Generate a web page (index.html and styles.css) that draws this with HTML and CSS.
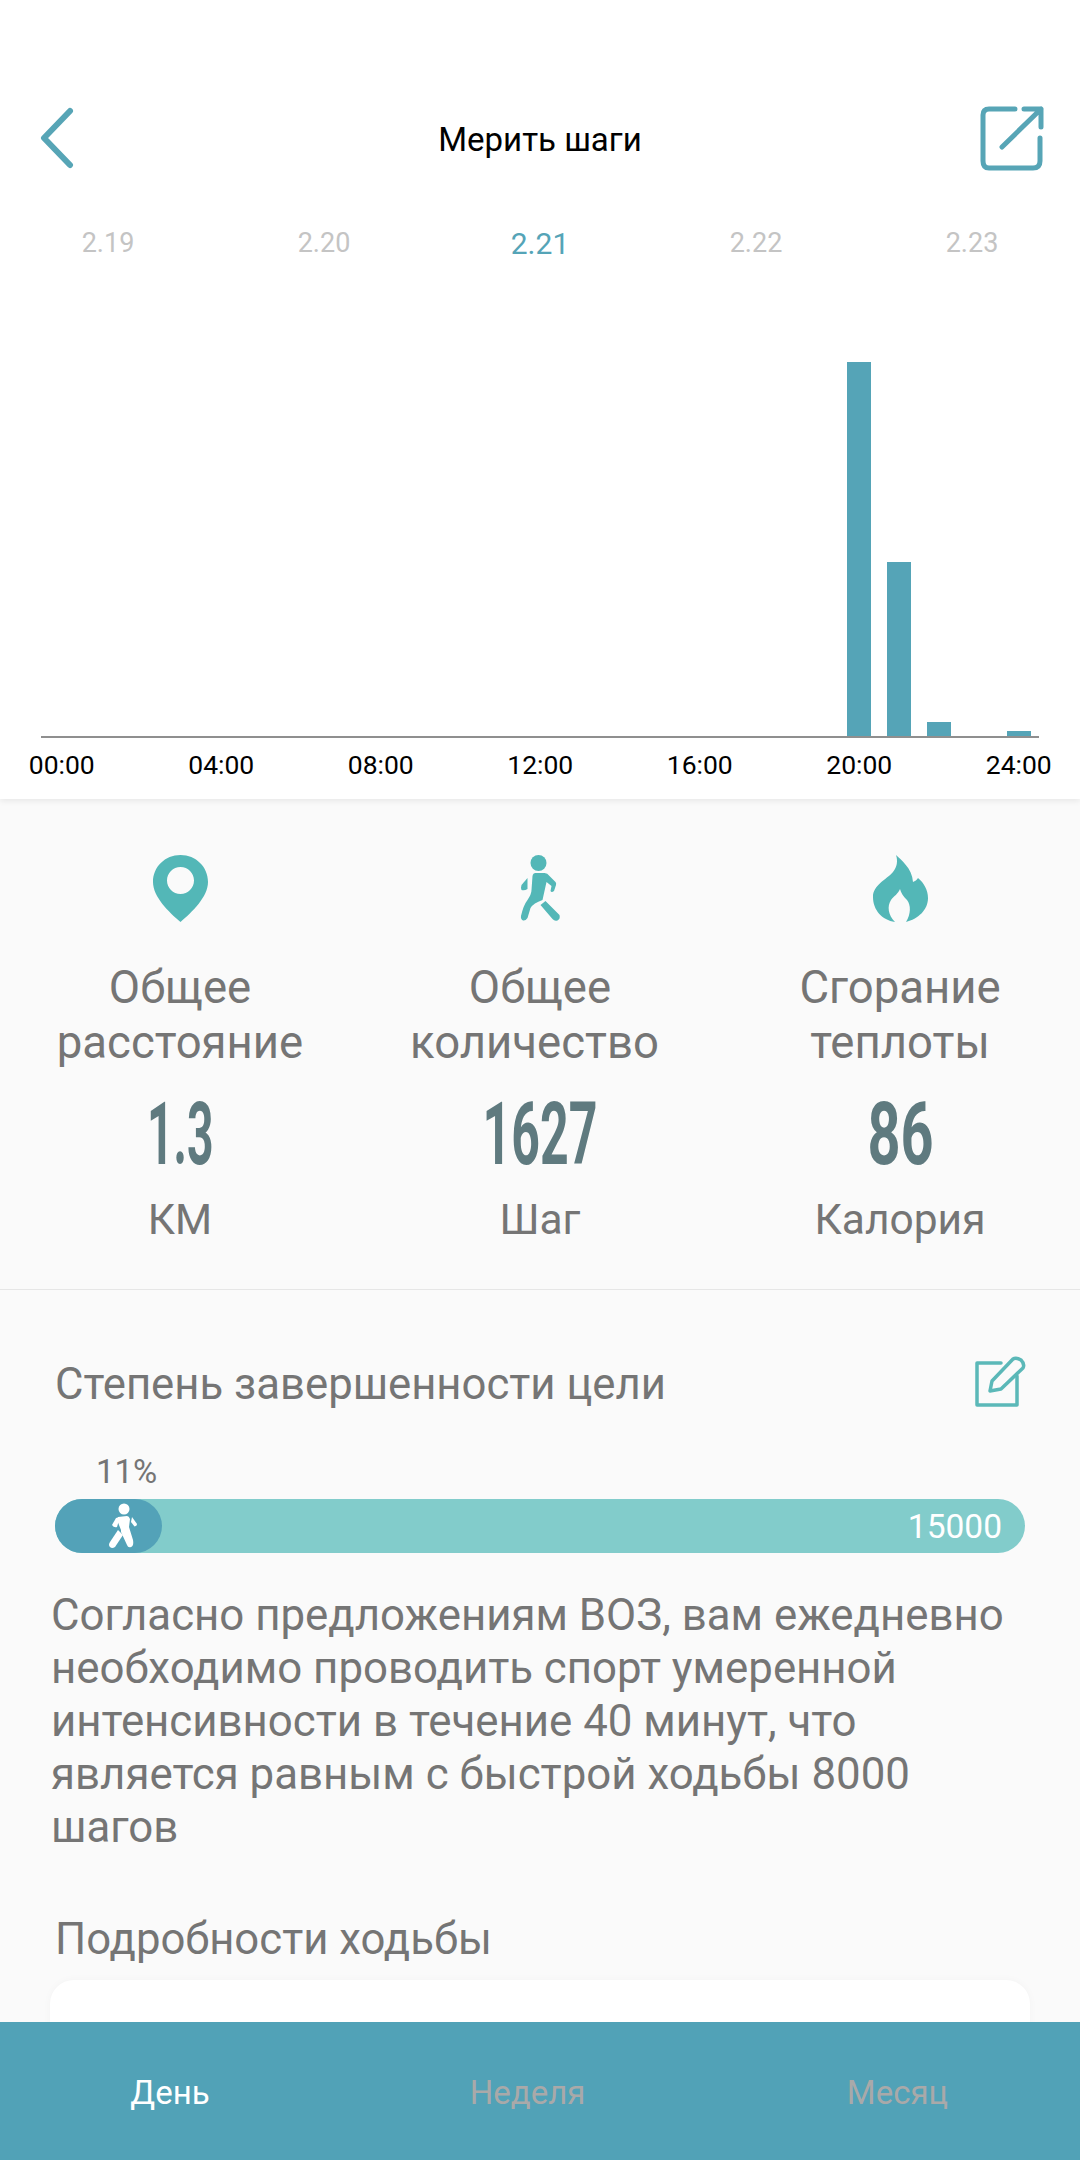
FILE: index.html
```html
<!DOCTYPE html>
<html lang="ru">
<head>
<meta charset="utf-8">
<title>Мерить шаги</title>
<link rel="stylesheet" href="styles.css">
</head>
<body>
<div class="screen">
  <main class="scroll">
    <section class="top">
      <header class="header">
        <svg class="back" viewBox="0 0 36 62" aria-hidden="true"><path d="M31 4 L5 31 L31 58" fill="none" stroke="#57a5b6" stroke-width="6" stroke-linecap="round" stroke-linejoin="round"/></svg>
        <h1 class="title">Мерить шаги</h1>
        <svg class="share" viewBox="0 0 66 68" aria-hidden="true"><path d="M36 3 H10 Q4 3 4 9 V55 Q4 62 10 62 H54 Q61 62 61 55 V32 M45 3 H62 V21 M62 3 L23 41" fill="none" stroke="#57a5b6" stroke-width="5" stroke-linecap="round" stroke-linejoin="round"/></svg>
      </header>
      <div class="dates">
        <span class="date">2.19</span>
        <span class="date">2.20</span>
        <span class="date date-on">2.21</span>
        <span class="date">2.22</span>
        <span class="date">2.23</span>
      </div>
      <div class="chart">
        <div class="slot"></div><div class="slot"></div><div class="slot"></div><div class="slot"></div><div class="slot"></div>
        <div class="slot"></div><div class="slot"></div><div class="slot"></div><div class="slot"></div><div class="slot"></div>
        <div class="slot"></div><div class="slot"></div><div class="slot"></div><div class="slot"></div><div class="slot"></div>
        <div class="slot"></div><div class="slot"></div><div class="slot"></div><div class="slot"></div><div class="slot"></div>
        <div class="slot"><div class="bar" style="height:374px"></div></div>
        <div class="slot"><div class="bar" style="height:174px"></div></div>
        <div class="slot"><div class="bar" style="height:14px"></div></div>
        <div class="slot"></div>
        <div class="slot"><div class="bar" style="height:5px"></div></div>
      </div>
      <div class="times">
        <span>00:00</span><span>04:00</span><span>08:00</span><span>12:00</span><span>16:00</span><span>20:00</span><span>24:00</span>
      </div>
    </section>

    <section class="stats">
      <div class="stat">
        <svg class="stat-icon" viewBox="0 0 55 67" aria-hidden="true"><path fill="#53b7b7" fill-rule="evenodd" d="M27.5 0 C43 0 55 12 55 27 C55 42 39 57 27.500 67 C16 57 0 42 0 27 C0 12 12 0 27.500 0Z M27.500 12 C20 12 14 18 14 25.500 C14 33 20 39 27.500 39 C35 39 41 33 41 25.500 C41 18 35 12 27.500 12Z"/></svg>
        <div class="stat-label">Общее<br>расстояние</div>
        <div class="stat-num"><span class="num-narrow">1.3</span></div>
        <div class="stat-unit">КМ</div>
      </div>
      <div class="stat">
        <svg class="stat-icon" viewBox="38 15 44 67" aria-hidden="true"><g fill="#53b7b7"><circle cx="58" cy="23" r="8"/><path d="M55 33 H64 Q67 33 69 36 L75 42 Q76 43 75.500 45 L73.500 51 Q71 53 70 51 L71 46 L66 42 L62 60 Q53 63 50 68 L47 78 Q45 81 42.500 80.500 Q40 79 40.500 76 Q43 65 47 60 Q51 54 51 50 L52 36 Q52.500 33 55 33Z"/><path d="M47 38 L41 45 Q40 48 41 50 Q44 51 47 49Z"/><path d="M60 65 L65 61 L79 75 Q80 79 77 80.500 Q74 81.500 72 79Z"/></g></svg>
        <div class="stat-label">Общее<br><span class="label-off">количество</span></div>
        <div class="stat-num"><span>1627</span></div>
        <div class="stat-unit">Шаг</div>
      </div>
      <div class="stat">
        <svg class="stat-icon" viewBox="32 15 55 67" aria-hidden="true"><path fill="#53b7b7" d="M55 15 C60 20 71 28 72 42 C74 41 76 40 77 38 C83 43 87 50 87 58 C87 70 77 79 65 82 C70 74 70 65 66 60 C62 56 60 53 59 49 C57 54 53 56 50 60 C46 66 47 75 54 82 C41 80 32 70 32 57 C32 45 45 40 52 32 C56 27 57 21 55 15Z"/></svg>
        <div class="stat-label">Сгорание<br>теплоты</div>
        <div class="stat-num"><span class="num-wide">86</span></div>
        <div class="stat-unit">Калория</div>
      </div>
    </section>

    <section class="goal">
      <div class="goal-head">
        <h2 class="heading">Степень завершенности цели</h2>
        <svg class="edit" viewBox="0 0 52 52" aria-hidden="true"><g fill="none" stroke="#5bb8b8" stroke-width="3.500" stroke-linecap="round" stroke-linejoin="round"><path d="M26 7 H2 V49 H42 V20"/><path d="M15 35 L17 25 L38 3 Q41 1 46 4 Q50 8 48 12 L26 33Z"/></g></svg>
      </div>
      <div class="pct">11%</div>
      <div class="track">
        <div class="fill" style="width:107px">
          <svg class="fill-icon" viewBox="0 0 30 46" aria-hidden="true"><g fill="#fff"><circle cx="16" cy="6" r="5.500"/><path d="M10 14 L19 13 Q21 13 22 16 L21 24 L25 37 Q26 43 23 44 Q20 45 19 42 L13 29 L13 27 L9 17 Z"/><path d="M8 15 L12 14 L9 24 Q6 25 4 22 Z"/><path d="M24 14 L29 21 Q29 23 26.500 23.500 L23 19Z"/><path d="M10 27 L15 32 L7 44 Q4 46 2 44 Q0 42 2 39Z"/></g></svg>
        </div>
        <span class="track-val">15000</span>
      </div>
      <p class="advice">Согласно предложениям ВОЗ, вам ежедневно необходимо проводить спорт умеренной интенсивности в течение 40 минут, что является равным с быстрой ходьбы 8000 шагов</p>
      <h2 class="heading heading-detail">Подробности ходьбы</h2>
      <div class="card"></div>
    </section>
  </main>

  <nav class="nav">
    <span class="nav-item nav-on">День</span>
    <span class="nav-item">Неделя</span>
    <span class="nav-item">Месяц</span>
  </nav>
</div>
</body>
</html>
```
FILE: styles.css
```css
* { box-sizing: border-box; }
html, body { margin: 0; padding: 0; }
body { font-family: Roboto, "Noto Sans", sans-serif; background: #fafafa; }

.screen { width: 1080px; height: 2160px; display: flex; flex-direction: column; overflow: hidden; }
.scroll { flex: 1; min-height: 0; overflow: hidden; background: #fafafa; }

.top { height: 799px; background: #fff; box-shadow: 0 2px 6px rgba(0,0,0,.08); position: relative; }
.header { height: 220px; padding: 106px 35px 0 40px; display: flex; justify-content: space-between; align-items: flex-start; position: relative; }
.back { width: 36px; height: 62px; margin-top: 1px; margin-left: -1px; }
.share { width: 66px; height: 68px; }
.title { position: absolute; left: 0; right: 0; top: 119px; margin: 0; text-align: center; font-size: 33px; line-height: 42px; font-weight: 400; color: #000; }

.dates { height: 46px; display: grid; grid-template-columns: repeat(5, 216px); align-items: center; }
.date { text-align: center; font-size: 27px; color: #c4c4c4; }
.date-on { font-size: 30px; color: #55a4b7; }

.chart { height: 472px; margin: 0 41px; display: flex; align-items: flex-end; border-bottom: 2px solid #8f8f8f; width: 998px; }
.slot { width: 40px; flex: none; padding-left: 6px; display: flex; justify-content: flex-start; align-items: flex-end; }
.bar { width: 24px; background: #55a4b7; }

.times { margin: 9px 0 0 -18px; display: grid; grid-template-columns: repeat(7, 159.500px); text-align: center; font-size: 26.500px; line-height: 36px; color: #000; justify-content: start; }

.stats { height: 491px; padding-top: 56px; display: grid; grid-template-columns: repeat(3, 360px); border-bottom: 1px solid #e6e6e6; }
.stat { display: flex; flex-direction: column; align-items: center; }
.stat-icon { height: 67px; width: 55px; flex: none; display: block; }
.stat-label { margin-top: 38px; text-align: center; font-size: 45.500px; line-height: 55px; color: #757575; }
.label-off { margin-right: 11px; }
.stat-num { margin-top: 19px; height: 90px; line-height: 90px; font-size: 88px; font-weight: 700; color: #5f7a7f; text-align: center; }
.stat-num span { display: inline-block; transform: scaleX(.568); }
.stat-num .num-narrow { transform: scaleX(.525); }
.stat-num .num-wide { transform: scaleX(.655); }
.stat-unit { margin-top: 14px; font-size: 42.500px; line-height: 54px; color: #757575; }

.goal { padding: 0 50px; }
.goal-head { height: 117px; padding: 66px 3px 0 5px; display: flex; justify-content: space-between; align-items: flex-start; }
.heading { margin: 0; font-size: 43.700px; line-height: 56px; font-weight: 400; color: #757575; }
.edit { width: 52px; height: 52px; margin-top: 0; }
.pct { margin: 47px 0 0 46px; font-size: 33px; line-height: 36px; color: #757575; }
.track { margin: 9px 5px 0 5px; height: 54px; border-radius: 27px; background: #82cccb; position: relative; display: flex; align-items: center; justify-content: flex-end; padding-right: 23px; }
.fill { position: absolute; left: 0; top: 0; bottom: 0; background: #53a2b8; border-radius: 27px; display: flex; align-items: center; justify-content: center; padding-left: 28px; }
.fill-icon { width: 30px; height: 46px; }
.track-val { font-size: 33.500px; color: #fff; }
.advice { margin: 36px 0 0 1px; width: 980px; font-size: 43.800px; line-height: 53px; color: #757575; }
.heading-detail { margin: 57px 0 0 5px; }
.card { margin-top: 13px; height: 120px; background: #fff; border-radius: 24px; box-shadow: 0 0 8px rgba(0,0,0,.03); }

.nav { height: 138px; flex: none; background: #51a2b7; position: relative; display: grid; grid-template-columns: 340px 375px 365px; align-items: center; padding-top: 2px; }
.nav-item { text-align: center; font-size: 33px; color: #a9a9a9; }
.nav-on { color: #fff; }
```
